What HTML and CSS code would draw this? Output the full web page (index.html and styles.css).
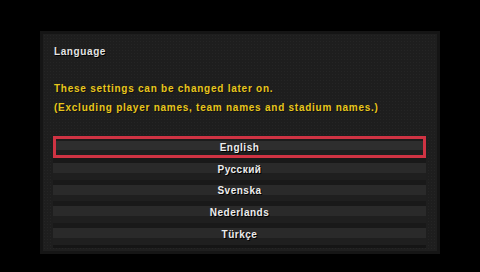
FILE: index.html
```html
<!DOCTYPE html>
<html lang="en">
<head>
<meta charset="utf-8">
<title>Language</title>
<link rel="stylesheet" href="styles.css">
</head>
<body>
<div class="panel">
  <div class="title">Language</div>
  <div class="notice">
    <p>These settings can be changed later on.</p>
    <p>(Excluding player names, team names and stadium names.)</p>
  </div>
  <ul class="list">
    <li class="row selected">English</li>
    <li class="row">Русский</li>
    <li class="row">Svenska</li>
    <li class="row">Nederlands</li>
    <li class="row">Türkçe</li>
  </ul>
</div>
</body>
</html>
```
FILE: styles.css
```css
html, body {
  margin: 0;
  padding: 0;
  background: #000;
  width: 480px;
  height: 272px;
  overflow: hidden;
}
body {
  font-family: "Liberation Sans", Arial, sans-serif;
  font-weight: bold;
  font-size: 10px;
}
.panel {
  box-sizing: border-box;
  margin: 31px 0 0 40px;
  width: 400px;
  height: 223px;
  border: 3px solid #151515;
  background-color: #1e1e1e;
  background-image: radial-gradient(circle, #252525 0.7px, transparent 0.9px);
  background-size: 3px 3px;
  padding: 11.5px 11px 0 10px;
}
.title {
  color: #e4e4e4;
  line-height: 12px;
  letter-spacing: 0.6px;
  padding-left: 1px;
  text-shadow: 1px 1px 0 #000;
}
.notice {
  margin-top: 21.5px;
  padding-left: 1px;
  color: #e8c61c;
  letter-spacing: 0.75px;
  text-shadow: 1px 1px 0 #111;
}
.notice p {
  margin: 0;
  line-height: 19px;
}
.list {
  list-style: none;
  margin: 19px 0 0 0;
  padding: 0 0 3px 0;
  width: 373px;
  background: #151515;
}
.row {
  box-sizing: border-box;
  height: 21.8px;
  display: flex;
  align-items: center;
  justify-content: center;
  padding-top: 1px;
  color: #ececec;
  letter-spacing: 0.5px;
  text-shadow: 1px 1px 0 #000;
  background: linear-gradient(to bottom,
    #191919 0, #191919 5px,
    #2a2a2a 5px, #2a2a2a 15px,
    #1f1f1f 15px, #1f1f1f 100%);
}
.row.selected {
  border: 3px solid #cf3343;
  background: linear-gradient(to bottom,
    #1c1c1c 0, #1c1c1c 2px,
    #2e2e2e 2px, #2e2e2e 11px,
    #1f1f1f 11px, #1f1f1f 100%);
}
```
